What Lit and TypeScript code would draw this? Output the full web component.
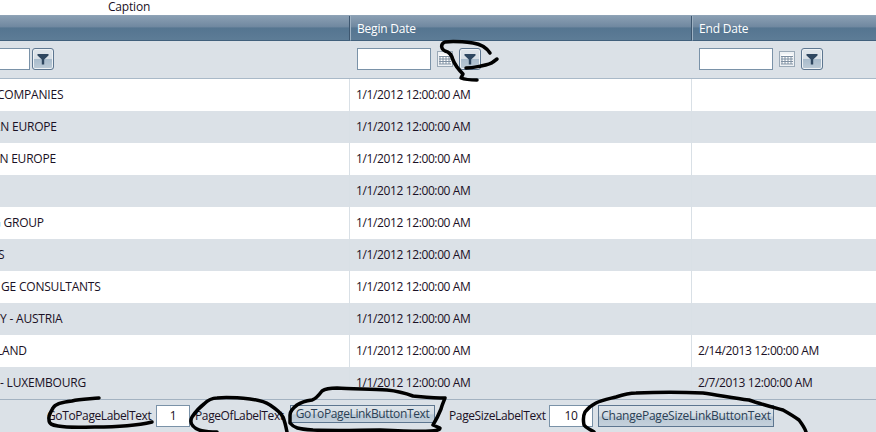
import { LitElement, html, css, svg } from "lit";
import { customElement } from "lit/decorators.js";

const ROWS: { name: string; indent: number; begin: string; end: string }[] = [
  { name: "COMPANIES", indent: -3, begin: "1/1/2012 12:00:00 AM", end: "" },
  { name: "RN EUROPE", indent: -7, begin: "1/1/2012 12:00:00 AM", end: "" },
  { name: "AN EUROPE", indent: -8, begin: "1/1/2012 12:00:00 AM", end: "" },
  { name: "", indent: 0, begin: "1/1/2012 12:00:00 AM", end: "" },
  { name: "G GROUP", indent: -8, begin: "1/1/2012 12:00:00 AM", end: "" },
  { name: "S", indent: -2, begin: "1/1/2012 12:00:00 AM", end: "" },
  { name: "GE CONSULTANTS", indent: 1, begin: "1/1/2012 12:00:00 AM", end: "" },
  { name: "Y - AUSTRIA", indent: 0, begin: "1/1/2012 12:00:00 AM", end: "" },
  { name: "LAND", indent: -4, begin: "1/1/2012 12:00:00 AM", end: "2/14/2013 12:00:00 AM" },
  { name: "- LUXEMBOURG", indent: 0, begin: "1/1/2012 12:00:00 AM", end: "2/7/2013 12:00:00 AM" },
];

const SCRIBBLES = [
  "M490 53 C486 47 480 44 473 43 C465 42 453 41 445 42 C440 44 441 49 445 51 C450 52 452 56 453 60 C455 65 458 69 463 74 L461 78 C466 80 472 80 477 80",
  "M466 68 C472 68 476 67 481 66 C486 65 491 64 493 62 L497 59",
  "M99 398 C90 399 80 399 72 401 C62 402 55 404 53 408 C50 413 48 417 49 420 C49 424 52 425 58 426 C70 428 82 427 95 427 C115 427 135 426 152 422",
  "M217 432 C205 432 197 431 193 426 C190 423 191 419 192 417 C196 411 200 407 204 404 C208 400 212 398 217 398 C228 397 240 398 250 399 C258 400 265 402 270 405 C276 409 281 413 283 417 C285 422 286 427 287 432",
  "M290 423 C294 428 298 429 313 430 C340 431 360 430 380 430 C400 431 420 432 430 431 C436 431 440 430 440 428 L433 425 C436 420 439 414 441 409 C442 405 444 401 445 398 C435 398 425 397 413 396 C405 393 397 391 387 390 C370 389 350 389 337 388 C330 388 325 389 322 391 C319 395 316 399 312 400 C305 401 300 403 297 405 C293 408 290 411 290 415 Z",
  "M594 432 C590 429 586 428 584 425 C583 420 583 416 585 412 C588 408 592 405 596 403 C602 400 608 399 616 397 C622 395 628 393 636 393 C660 392 680 392 703 393 C718 395 733 398 749 400 C760 404 772 407 783 410 C790 414 795 417 799 420 C802 424 805 428 806 432",
];

@customElement("app-root")
export class AppRoot extends LitElement {
  static styles = css`
    :host {
      display: block;
      position: relative;
      width: 876px;
      height: 432px;
      overflow: hidden;
      background: #fff;
      font-family: "Open Sans", "Noto Sans", sans-serif;
      font-size: 12px;
      letter-spacing: -0.38px;
      color: #1a1025;
    }
    .caption {
      height: 15px;
      line-height: 13px;
      padding-left: 108px;
      letter-spacing: -0.2px;
    }
    .grid {
      display: grid;
      grid-template-columns: 350px 342px 184px;
    }
    .head {
      height: 26px;
      box-sizing: border-box;
      line-height: 25px;
      padding-left: 6px;
      color: #fff;
      letter-spacing: -0.2px;
      background: linear-gradient(#8a9fb3 0, #7088a0 45%, #557590 50%, #5d7c96 100%);
      border-top: 1px solid #8fa3b6;
      border-bottom: 1px solid #41607c;
      border-left: 1px solid #9fb2c3;
    }
    .head.first {
      border-left: 0;
      box-shadow: inset -1px 0 0 #3d566f;
    }
    .head.mid {
      box-shadow: inset -1px 0 0 #3d566f;
    }
    .filter {
      height: 38px;
      box-sizing: border-box;
      background: #dbe1e7;
      border-bottom: 1px solid #a9b9c8;
      display: flex;
      align-items: center;
      gap: 2px;
      padding-bottom: 1px;
    }
    .filter.first {
      margin-left: -44px;
    }
    .filter.date {
      padding-left: 7px;
    }
    .input {
      box-sizing: border-box;
      height: 22px;
      width: 74px;
      background: #fff;
      border: 1px solid #7a92a8;
      flex: none;
    }
    .cal {
      flex: none;
      width: 16px;
      height: 16px;
      margin: 0 4px;
    }
    .fbtn {
      flex: none;
      box-sizing: border-box;
      width: 22px;
      height: 22px;
      border: 1px solid #5d7690;
      border-radius: 3px;
      background: linear-gradient(#dfe5ea 0, #d8dfe6 48%, #a9bccc 52%, #bccad6 100%);
      box-shadow: inset 0 0 0 1px #eef2f5;
      display: flex;
      align-items: center;
      justify-content: center;
    }
    .cell {
      height: 32px;
      box-sizing: border-box;
      line-height: 31px;
      white-space: nowrap;
      overflow: hidden;
    }
    .cell.name {
      letter-spacing: -0.2px;
    }
    .cell.date {
      padding-left: 6px;
    }
    .cell.line {
      border-right: 1px solid #d9e0e6;
    }
    .alt {
      background: #dbe1e7;
    }
    .pager {
      box-sizing: border-box;
      height: 33px;
      background: #dbe1e7;
      border-top: 1px solid #a3b2c1;
      padding: 5px 0 0 47px;
      display: flex;
      align-items: flex-start;
    }
    .pl {
      line-height: 21px;
      flex: none;
    }
    .pin {
      box-sizing: border-box;
      flex: none;
      height: 22px;
      background: #fff;
      border: 1px solid #7a92a8;
      text-align: center;
      line-height: 20px;
    }
    .pbtn {
      box-sizing: border-box;
      flex: none;
      height: 18px;
      line-height: 16px;
      text-align: center;
      color: #2b3f55;
      border: 1px solid #5d7690;
      background: linear-gradient(#dfe5ea 0, #d3dce4 50%, #b9c8d5 55%, #c5d1dc 100%);
    }
    .pbtn.tall {
      height: 22px;
      line-height: 20px;
      letter-spacing: -0.25px;
    }
    .l1 { width: 105px; }
    .l2 { width: 86px; }
    .l3 { width: 96px; }
    .w34 { width: 34px; margin: 0 5px 0 4px; }
    .w44 { width: 44px; margin: 0 5px 0 4px; }
    .b1 { width: 145px; margin-left: 9px; margin-right: 14px; }
    .b2 { width: 176px; }
    .ink {
      position: absolute;
      inset: 0;
      pointer-events: none;
    }
  `;

  private funnel() {
    return html`<svg width="12" height="12" viewBox="0 0 12 12">
      <path d="M0.5 1h11v1.5L7.2 6.5V11.5H4.8V6.5L0.5 2.5z" fill="#2f4760"></path>
    </svg>`;
  }

  private calendar() {
    const lines = [];
    for (let i = 0; i < 4; i++) {
      lines.push(svg`<path d="M${3 + i * 3} 5v8" stroke="#7f90a2"></path>`);
    }
    for (let i = 0; i < 4; i++) {
      lines.push(svg`<path d="M2 ${5.5 + i * 2.5}h12" stroke="#7f90a2"></path>`);
    }
    return html`<svg class="cal" viewBox="0 0 16 16">
      <rect x="0.5" y="0.5" width="15" height="15" fill="#eef1f4" stroke="#9aa9b7"></rect>
      <rect x="2.5" y="3.5" width="11" height="10" fill="#fff"></rect>
      ${lines}
    </svg>`;
  }

  render() {
    return html`
      <div class="caption">Caption</div>
      <div class="grid">
        <div class="head first"></div>
        <div class="head mid">Begin Date</div>
        <div class="head">End Date</div>

        <div class="filter first">
          <div class="input"></div>
          <div class="fbtn">${this.funnel()}</div>
        </div>
        <div class="filter date">
          <div class="input"></div>
          ${this.calendar()}
          <div class="fbtn">${this.funnel()}</div>
        </div>
        <div class="filter date">
          <div class="input"></div>
          ${this.calendar()}
          <div class="fbtn">${this.funnel()}</div>
        </div>

        ${ROWS.map((r, i) => {
          const alt = i % 2 === 1 ? "alt" : "";
          return html`
            <div class="cell name line ${alt}" style="text-indent:${r.indent}px">${r.name}</div>
            <div class="cell line date ${alt}">${r.begin}</div>
            <div class="cell date ${alt}">${r.end}</div>
          `;
        })}
      </div>
      <div class="pager">
        <span class="pl l1">GoToPageLabelText</span>
        <span class="pin w34">1</span>
        <span class="pl l2">PageOfLabelText</span>
        <span class="pbtn b1">GoToPageLinkButtonText</span>
        <span class="pl l3">PageSizeLabelText</span>
        <span class="pin w44">10</span>
        <span class="pbtn tall b2">ChangePageSizeLinkButtonText</span>
      </div>
      <svg class="ink" width="876" height="432" viewBox="0 0 876 432" fill="none">
        ${SCRIBBLES.map(
          (d) => svg`<path d=${d} stroke="#000" stroke-width="3.5" stroke-linecap="round" stroke-linejoin="round"></path>`
        )}
      </svg>
    `;
  }
}
